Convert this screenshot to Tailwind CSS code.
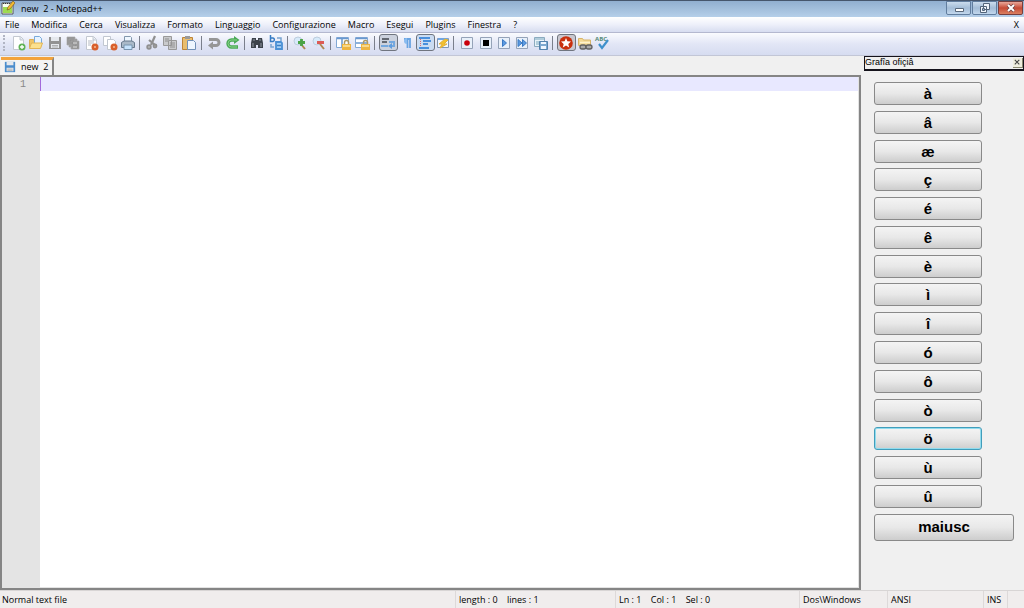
<!DOCTYPE html>
<html lang="it">
<head>
<meta charset="utf-8">
<title>new 2 - Notepad++</title>
<script src="https://cdn.jsdelivr.net/npm/@tailwindcss/browser@4"></script>
</head>
<body class="flex h-screen flex-col overflow-hidden bg-[#f0f0f0] font-['Open_Sans','Noto_Sans',sans-serif] text-[9px] text-black">
<svg class="hidden" aria-hidden="true">
  <defs>
    <g id="disk"><path d="M2 2h12v12H2z" fill="currentColor"/><path d="M4 2h8v4H4zM4 9h8v4H4z" fill="#e5e8ed"/><path d="M5 10.500h6M5 12h6" stroke="#999" stroke-width=".7"/></g>
    <g id="page"><path d="M3.500 1.500h7l3 3v10h-10z" fill="#fff" stroke="#c3c8d0"/><path d="M10 2v3h3" fill="#dce5f0" stroke="#c3c8d0"/></g>
    <g id="badge"><circle cx="12" cy="12" r="3.500" fill="#d9602c"/><path d="m11 11 2 2m0-2-2 2" stroke="#f3b58c" stroke-width=".8"/></g>
    <g id="lock"><path d="M9.500 9V7.500a2 2 0 0 1 4 0V9" fill="none" stroke="#b09a62" stroke-width="1.500"/><path d="M7 9h9v6H7z" fill="#eeb541"/><path d="M8 10h7v2H8z" fill="#f8d98a"/></g>
    <g id="frame"><path d="M2.500 2.500h11v11h-11z" fill="#e8f0fa" stroke="#95a3b8"/></g>
  </defs>
</svg>

<header class="shrink-0">
  <div class="flex h-[17px] items-start border-t border-[#46566d] bg-linear-to-b from-[#91afd0] to-[#b5cfe9] pl-px pr-px">
    <svg class="h-3.5 w-3.5" viewBox="0 0 14 14"><path d="M1 2h11v11H1z" fill="#f8fff1" stroke="#555"/><path d="M2 6h9v6H2z" fill="#9edb52"/><path d="M2 2.500h8" stroke="#333" stroke-dasharray="1 1"/><path d="m6 9 1-3 5-6 2 2-5 6z" fill="#f2ba32" stroke="#765019" stroke-width=".6"/></svg>
    <h1 class="ml-[6px] whitespace-pre text-[9px] leading-4">new  2 - Notepad++</h1>
    <div class="ml-auto flex gap-px">
      <button aria-label="Riduci a icona" class="flex h-[14px] w-[25px] items-center justify-center rounded-b-[2px] border border-[#617d9e] bg-linear-to-b from-[#cbdced] via-[#a4bdd7] to-[#c2d7ed]"><svg class="h-3 w-3" viewBox="0 0 12 12"><path d="M2.500 6.500h8v3h-8z" fill="#fff" stroke="#59697c"/></svg></button>
      <button aria-label="Ripristina" class="flex h-[14px] w-[25px] items-center justify-center rounded-b-[2px] border border-[#617d9e] bg-linear-to-b from-[#cbdced] via-[#a4bdd7] to-[#c2d7ed]"><svg class="h-3 w-3" viewBox="0 0 12 12"><path d="M4.500 1.500h6v6h-6zM1.500 4.500h6v6h-6z" fill="#eef4fa" stroke="#53657a"/><path d="M3.500 6.500h2v2h-2z" fill="#a5bad1" stroke="#53657a"/></svg></button>
      <button aria-label="Chiudi" class="flex h-[14px] w-[25px] items-center justify-center rounded-b-[2px] border border-[#773e3d] bg-linear-to-b from-[#e8a79a] via-[#c64935] to-[#da8061]"><svg class="h-3 w-3" viewBox="0 0 12 12"><path d="m3 3 6 6M9 3 3 9" stroke="#6b4144" stroke-width="3.400"/><path d="m3 3 6 6M9 3 3 9" stroke="#fff" stroke-width="2"/></svg></button>
    </div>
  </div>
  <nav class="flex h-4 items-end border-b border-[#b4b8cf] bg-linear-to-b from-white via-[#eef0fa] to-[#d7ddf0] px-[5px] leading-[14px]">
    <div class="flex gap-3">
      <button>File</button><button>Modifica</button><button>Cerca</button><button>Visualizza</button><button>Formato</button><button>Linguaggio</button><button>Configurazione</button><button>Macro</button><button>Esegui</button><button>Plugins</button><button>Finestra</button><button>?</button>
    </div>
    <button class="ml-auto" aria-label="Chiudi documento">X</button>
  </nav>
  <div role="toolbar" class="flex h-[23px] items-center border-b border-[#c2c6d6] bg-linear-to-b from-[#fafbfe] via-[#e2e6f6] to-[#d6dcf0] pb-[3px] pl-[3px]">
    <span class="h-4 w-[6px] border-l-2 border-dotted border-[#b1b5c3]"></span>
    <div class="flex w-32 justify-around">
      <button aria-label="Nuovo"><svg class="h-4 w-4" viewBox="0 0 16 16"><use href="#page"/><circle cx="12" cy="12" r="3.500" fill="#5fb255"/><path d="M12 10v4M10 12h4" stroke="#fff" stroke-width="1.300"/></svg></button>
      <button aria-label="Apri"><svg class="h-4 w-4" viewBox="0 0 16 16"><path d="M1.500 12.500v-8h4l1 2h5v6z" fill="#efc468" stroke="#dcae58"/><path d="M6.500 1.500h5l2 2V9h-7z" fill="#e7f3ff" stroke="#79aada"/><path d="m1.500 13.500 2-5.500h11l-2 5.500z" fill="#fbe08e" stroke="#e2b454"/></svg></button>
      <button aria-label="Salva"><svg class="h-4 w-4 text-[#929292]" viewBox="0 0 16 16"><use href="#disk"/></svg></button>
      <button aria-label="Salva tutto"><svg class="h-4 w-4" viewBox="0 0 16 16"><path d="M2 2h8v8H2zM4 4h8v8H4zM6 6h8v8H6z" fill="#909090" stroke="#aaa" stroke-width=".7"/><path d="M8 7h4v2H8zM8 11h4v2H8z" fill="#bbb"/></svg></button>
      <button aria-label="Chiudi file"><svg class="h-4 w-4" viewBox="0 0 16 16"><use href="#page"/><path d="M5 6h6M5 8h6M5 10h3" stroke="#b5bbc4"/><use href="#badge"/></svg></button>
      <button aria-label="Chiudi tutti"><svg class="h-4 w-4" viewBox="0 0 16 16"><path d="M1.500 1.500h7v9h-7z" fill="#fff" stroke="#c1c7d0"/><path d="M5.500 4.500h6l2 2v8h-8z" fill="#fff" stroke="#c1c7d0"/><use href="#badge"/></svg></button>
      <button aria-label="Stampa"><svg class="h-4 w-4" viewBox="0 0 16 16"><path d="M4.500 1.500h6l1 1V8h-7z" fill="#eff7ff" stroke="#8297ad"/><path d="M1.500 7.500 4 6h8l2.500 1.500v5h-13z" fill="#aab9c8" stroke="#66788b"/><path d="M4 10h8v4.500H4z" fill="#c6e3fd" stroke="#7894ae"/></svg></button>
    </div>
    <span class="flex h-[14px] w-[6px] pl-[2px]"><i class="w-px bg-[#7a7f8c]"></i></span>
    <div class="flex w-[55px] justify-around">
      <button aria-label="Taglia"><svg class="h-4 w-4" viewBox="0 0 16 16"><path d="M11 1 7 10M5 5l6 5" stroke="#909090" stroke-width="2.200"/><circle cx="5" cy="12" r="1.800" fill="#bbb" stroke="#909090" stroke-width="1.800"/><circle cx="11" cy="11" r="1.500" fill="#bbb" stroke="#909090" stroke-width="1.800"/></svg></button>
      <button aria-label="Copia"><svg class="h-4 w-4" viewBox="0 0 16 16"><path d="M1.500 1.500h8v9h-8zM6.500 5.500h8v9h-8z" fill="#c9cacc" stroke="#999"/><path d="M3 4h4M3 6h3M8 8h5M8 10h5M8 12h5" stroke="#909090"/></svg></button>
      <button aria-label="Incolla"><svg class="h-4 w-4" viewBox="0 0 16 16"><path d="M1.500 2.500h10v12h-10z" fill="#e8bd6e" stroke="#bd8437"/><path d="M4 1h5v3H4z" fill="#9a9a9a"/><path d="M6.500 5.500h6l2 2v7h-8z" fill="#eef6ff" stroke="#7191b8"/></svg></button>
    </div>
    <span class="flex h-[14px] w-[7px] pl-[3px]"><i class="w-px bg-[#7a7f8c]"></i></span>
    <div class="flex w-[37px] justify-around">
      <button aria-label="Annulla"><svg class="h-4 w-4" viewBox="0 0 16 16"><path d="M3 4.500h7a3 3 0 0 1 0 6H6" fill="none" stroke="#969696" stroke-width="3"/><path d="m2 10.500 5-4v8z" fill="#969696"/></svg></button>
      <button aria-label="Ripeti"><svg class="h-4 w-4" viewBox="0 0 16 16"><path d="M13 12H6.500a3.500 3.500 0 0 1 0-7H10" fill="none" stroke="#4aa956" stroke-width="3.400"/><path d="m14.500 5-5.500-4v8z" fill="#4aa956"/><path d="M12 12H6.500a3.500 3.500 0 0 1 0-7H12" fill="none" stroke="#8ad48a"/></svg></button>
    </div>
    <span class="flex h-[14px] w-[6px] pl-[2px]"><i class="w-px bg-[#7a7f8c]"></i></span>
    <div class="flex w-[37px] justify-around">
      <button aria-label="Trova"><svg class="h-4 w-4" viewBox="0 0 16 16"><path d="M3 3h4v2h2V3h4l1 5v5H9v-3H7v3H2V8z" fill="#3d434b"/><path d="M4 8v4M12 8v4M5 4v2M11 4v2" stroke="#949ba5"/></svg></button>
      <button aria-label="Sostituisci"><svg class="h-4 w-4" viewBox="0 0 16 16"><path d="M2.500 0v6.500H5a1.800 1.800 0 0 0 0-3.500H3" fill="none" stroke="#377cc4" stroke-width="1.500"/><path d="M9 3h4v3M3 9v3h3" fill="none" stroke="#79a4d0" stroke-width="1.500"/><path d="M8 7h5l1 1v6H8z" fill="#a6d0f5" stroke="#4a90d5" stroke-width="1.800"/><path d="M9 10.500h4" stroke="#3c80c6" stroke-width="1.500"/></svg></button>
    </div>
    <span class="flex h-[14px] w-[6px] pl-[2px]"><i class="w-px bg-[#7a7f8c]"></i></span>
    <div class="flex w-[37px] justify-around">
      <button aria-label="Ingrandisci"><svg class="h-4 w-4" viewBox="0 0 16 16"><circle cx="6" cy="6" r="4" fill="#d7eafa" stroke="#bdcddd"/><path d="m9 9 4 5" stroke="#ae8752" stroke-width="2"/><path d="M9.500 4v7M6 7.500h7" stroke="#4ba446" stroke-width="2.800"/></svg></button>
      <button aria-label="Riduci"><svg class="h-4 w-4" viewBox="0 0 16 16"><circle cx="6" cy="6" r="4" fill="#d7eafa" stroke="#bdcddd"/><path d="m9 9 4 5" stroke="#ae8752" stroke-width="2"/><path d="M6 7.500h7" stroke="#dd5b55" stroke-width="3"/></svg></button>
    </div>
    <span class="flex h-[14px] w-[6px] pl-[2px]"><i class="w-px bg-[#7a7f8c]"></i></span>
    <div class="flex w-[37px] justify-around">
      <button aria-label="Sincronizza verticale"><svg class="h-4 w-4" viewBox="0 0 16 16"><path d="M1.500 2.500h12v10h-12z" fill="#fff" stroke="#83a9d5"/><path d="M2 3.500h11M7 3v9" stroke="#6898d0" stroke-width="1.500"/><use href="#lock"/></svg></button>
      <button aria-label="Sincronizza orizzontale"><svg class="h-4 w-4" viewBox="0 0 16 16"><path d="M1.500 2.500h12v10h-12z" fill="#fff" stroke="#83a9d5"/><path d="M2 3.500h11M2 8h11" stroke="#6898d0" stroke-width="1.500"/><use href="#lock"/></svg></button>
    </div>
    <span class="flex h-[14px] w-[7px] pl-[3px]"><i class="w-px bg-[#7a7f8c]"></i></span>
    <div class="flex w-[74px] items-center justify-around">
      <button aria-label="A capo automatico" aria-pressed="true" class="flex h-[17px] w-[19px] items-center justify-center rounded-[3px] border border-[#70757f] bg-[#ccd2de]"><svg class="h-4 w-4" viewBox="0 0 16 16"><path d="M2 4h7M2 7h5" stroke="#42474f" stroke-width="1.500"/><path d="M1 11h7M9 7h5v4h-3" fill="none" stroke="#74a8df" stroke-width="2"/><path d="m8 11 4-3v6z" fill="#5e9cde"/></svg></button>
      <button aria-label="Mostra tutti i caratteri"><svg class="h-4 w-4" viewBox="0 0 16 16"><path d="M5 4h6v9M8.500 4v9" fill="none" stroke="#69a4e2" stroke-width="1.800"/><path d="M8 3v6a3 3 0 0 1 0-6" fill="#8abcf0"/></svg></button>
      <button aria-label="Guide indentazione" aria-pressed="true" class="flex h-[17px] w-[19px] items-center justify-center rounded-[3px] border border-[#70757f] bg-[#cbdcf2]"><svg class="h-4 w-4" viewBox="0 0 16 16"><path d="M3.500 2v12" stroke="#d66c72" stroke-dasharray="1 1"/><path d="M2 3h11M6 6h8M6 9h5M2 13h10" stroke="#4a90dd" stroke-width="2"/></svg></button>
      <button aria-label="Lingua utente"><svg class="h-4 w-4" viewBox="0 0 16 16"><path d="M1.500 3.500h11v9h-11z" fill="#f2f7fd" stroke="#8097b5"/><path d="M2 4h10" stroke="#71a5e0" stroke-width="2"/><path d="m9 4-6 5h3l-2 4 7-4H8l4-4z" fill="#f2c02e" stroke="#e3b23a"/></svg></button>
    </div>
    <span class="flex h-[14px] w-[6px] pl-px"><i class="w-px bg-[#7a7f8c]"></i></span>
    <div class="flex w-[92px] justify-around">
      <button aria-label="Registra"><svg class="h-4 w-4" viewBox="0 0 16 16"><use href="#frame"/><circle cx="8" cy="8" r="2.800" fill="#c9000c"/></svg></button>
      <button aria-label="Ferma"><svg class="h-4 w-4" viewBox="0 0 16 16"><use href="#frame"/><path d="M5 5h6v6H5z"/></svg></button>
      <button aria-label="Riproduci"><svg class="h-4 w-4" viewBox="0 0 16 16"><use href="#frame"/><path d="m6.500 4.500 4 3.500-4 3.500z" fill="#5c9ae0" stroke="#3b7ac4"/></svg></button>
      <button aria-label="Riproduci più volte"><svg class="h-4 w-4" viewBox="0 0 16 16"><use href="#frame"/><path d="m4 4.500 4 3.500-4 3.500zm4.500 0 4 3.500-4 3.500z" fill="#5c9ae0" stroke="#3b7ac4"/></svg></button>
      <button aria-label="Salva macro"><svg class="h-4 w-4" viewBox="0 0 16 16"><path d="M1.500 2.500h10v9h-10z" fill="#e8f3f8" stroke="#8babbf"/><path d="M2 4h9M3 7h6M3 9h5" stroke="#7ba7bf"/><path d="M6.500 6.500h8v8h-8z" fill="#7ca8d0" stroke="#5483ad"/><path d="M8 7h5v2H8zM8 11h5v3H8z" fill="#eef6ff"/></svg></button>
    </div>
    <span class="flex h-[14px] w-[6px] pl-[2px]"><i class="w-px bg-[#7a7f8c]"></i></span>
    <div class="flex w-[55px] items-center justify-around">
      <button aria-label="Grafie" aria-pressed="true" class="flex h-[17px] w-[19px] items-center justify-center rounded-[3px] border border-[#70757f] bg-[#c9c8d0]"><svg class="h-4 w-4" viewBox="0 0 16 16"><circle cx="8" cy="8" r="6.800" fill="#c9300e"/><path d="m8 3 1.400 3.300 3.600.3-2.700 2.300.9 3.500L8 10.500l-3.200 1.900.9-3.500L3 6.600l3.600-.3z" fill="#fff"/></svg></button>
      <button aria-label="Apri cartella"><svg class="h-4 w-4" viewBox="0 0 16 16"><path d="M1.500 10.500v-7h4l1 1.500h7v5.500z" fill="#f5da94" stroke="#d8b56a"/><path d="M3 7.500h10" stroke="#fff3cc" stroke-width="1.500"/><rect x="3" y="10" width="6" height="4" rx="2" fill="#aaa" stroke="#606060" stroke-width="1.300"/><rect x="9" y="10" width="6" height="4" rx="2" fill="#aaa" stroke="#606060" stroke-width="1.300"/></svg></button>
      <button aria-label="Controllo ortografico"><svg class="h-4 w-4" viewBox="0 0 16 16"><text x="1" y="6" font-size="6" font-weight="700" fill="#548b78">ABC</text><path d="m5 9 3 4 6-8" fill="none" stroke="#3f91cc" stroke-width="2.200"/></svg></button>
    </div>
  </div>
</header>

<main class="flex min-h-0 flex-1">
  <section class="flex min-w-0 flex-1 flex-col">
    <div role="tablist" class="flex h-[19px] items-end px-px">
      <button role="tab" aria-selected="true" class="flex h-[18px] w-[53px] items-center gap-[5px] whitespace-pre border-r-2 border-t-3 border-r-[#858585] border-t-[#f3a33d] bg-[#f3f3f3] pb-px pl-[3px]"><svg class="h-3 w-3 text-[#4b8dcc]" viewBox="1 1 14 14"><use href="#disk"/></svg>new  2</button>
    </div>
    <div class="flex min-h-0 flex-1 border-2 border-[#858585] bg-white">
      <div class="w-[38px] shrink-0 bg-[#e4e4e4] pr-[14px] text-right font-['Liberation_Mono',monospace] text-[10px] leading-[15px] text-[#888]">1</div>
      <div class="flex flex-1 flex-col border-b border-r border-[#e3e3e3]"><input aria-label="Testo del documento" class="h-[14px] w-full border-l border-[#a26adb] bg-[#e8e8ff] outline-none"></div>
    </div>
  </section>
  <aside class="w-[163px] shrink-0 pl-[3px]">
    <div class="flex h-[15px] items-center justify-between border border-b-2 border-[#15131c] bg-[#f0f0f0] font-['Liberation_Sans',sans-serif] text-[9px]"><h2>Grafîa ofiçiâ</h2><button aria-label="Chiudi pannello" class="h-2.5 w-2.5 border-b border-r border-[#888770] bg-[#eeedde]"><svg viewBox="0 0 10 10"><path d="m2 2 5 5m0-5L2 7" stroke="#444" stroke-width="1.200"/></svg></button></div>
    <div class="mt-[11px] flex h-[426px] flex-col justify-between pl-[10px]" id="letters"></div>
    <button class="mt-[6px] ml-[10px] h-[27px] w-[140px] rounded-[3px] border border-[#898989] bg-linear-to-b from-[#f4f4f4] via-[#e8e8e8] to-[#cdcdcd] font-['Liberation_Sans',sans-serif] text-[15px] font-bold">maiusc</button>
  </aside>
</main>

<footer class="flex h-[18px] shrink-0 border-t border-[#d8d5d5] bg-[#f0eded] leading-[18px] whitespace-pre">
  <span class="flex-1 pl-[2px]">Normal text file</span>
  <span class="w-40 border-l border-[#ddd9d9] pl-[3px]">length : 0    lines : 1</span>
  <span class="w-[184px] border-l border-[#ddd9d9] pl-[3px]">Ln : 1    Col : 1    Sel : 0</span>
  <span class="w-[88px] border-l border-[#ddd9d9] pl-[3px]">Dos\Windows</span>
  <span class="w-24 border-l border-[#ddd9d9] pl-[3px]">ANSI</span>
  <span class="w-6 border-l border-[#ddd9d9] pl-[3px]">INS</span>
  <span class="w-[17px] border-l border-[#ddd9d9]"></span>
</footer>
<script>
  const base = "h-[23px] w-[108px] rounded-[3px] border bg-linear-to-b from-[#f4f4f4] via-[#e8e8e8] to-[#cdcdcd] font-['Liberation_Sans',sans-serif] text-[15px] leading-[21px] font-bold";
  for (const letter of "àâæçéêèìîóôòöùû") {
    const button = document.createElement("button");
    button.textContent = letter;
    button.className = base + (letter === "ö" ? " border-[#419dbb] inset-ring inset-ring-[#91dcee]" : " border-[#898989]");
    document.getElementById("letters").append(button);
  }
</script>
</body>
</html>
